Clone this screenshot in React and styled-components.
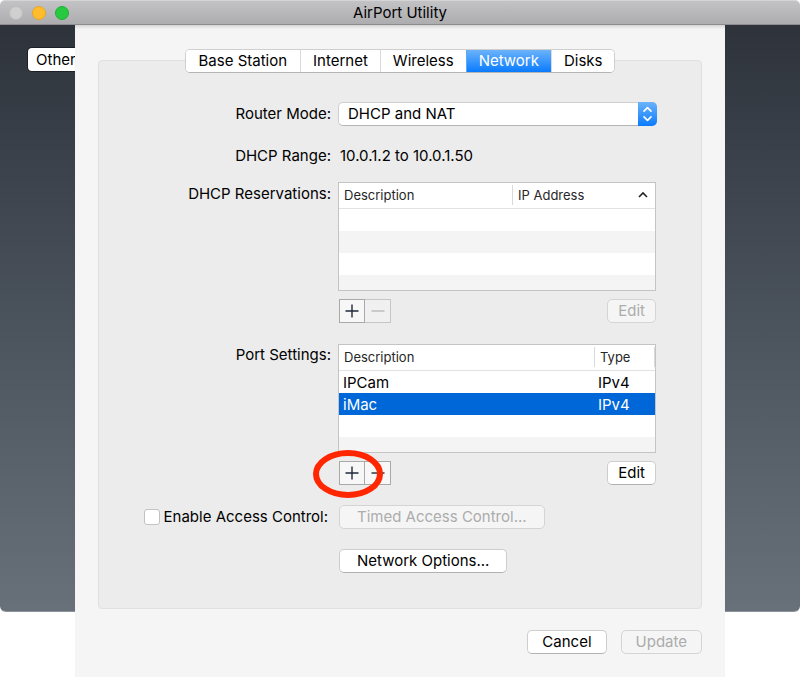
import React, { useState } from 'react';
import styled, { createGlobalStyle, css, ThemeProvider } from 'styled-components';

const theme = {
  colors: {
    text: '#000',
    disabled: '#acacac',
    sheet: '#f5f5f5',
    panel: '#ececec',
    border: '#c4c4c4',
    selection: '#0067d9',
    marker: '#ff2600',
  },
  accent: 'linear-gradient(#6bb3fa, #0a7bff)',
};

const GlobalStyle = createGlobalStyle`
  * {
    box-sizing: border-box;
  }
  body {
    margin: 0;
    background: #fff;
    color: #000;
    font-family: Inter, Roboto, sans-serif;
    font-size: 15px;
    line-height: 20px;
  }
  button, select, input {
    font: inherit;
    color: inherit;
    margin: 0;
  }
`;

/* ---------Window--------------- */
const TitleBar = styled.header`
  display: grid;
  grid-template-columns: 1fr auto 1fr;
  align-items: center;
  height: 25px;
  padding: 0 9px;
  background: linear-gradient(#c3c2c5, #adacaf);
  border-top: 1px solid #d4d3d6;
  border-bottom: 1px solid #8c8b8f;
  border-radius: 5px 5px 0 0;
`;
TitleBar.Title = styled.h1`
  margin: 0;
  font-size: 15px;
  font-weight: 400;
`;
TitleBar.Lights = styled.div`
  display: flex;
  gap: 9px;
`;
const Light = styled.button`
  width: 14px;
  height: 14px;
  padding: 0;
  border: 1px solid ${({ $edge }) => $edge};
  border-radius: 50%;
  background: ${({ $fill }) => $fill};
`;
const Stage = styled.main`
  display: grid;
`;
const Backdrop = styled.div`
  grid-area: 1 / 1;
  margin-bottom: 66px;
  padding: 23px 28px;
  background: linear-gradient(#2e333b, #4a525c 50%, #68707a);
  border-bottom: 1px solid #8b929c;
  border-radius: 0 0 6px 6px;
`;
const OtherButton = styled.button`
  width: 120px;
  height: 23px;
  padding: 0 8px;
  border: none;
  border-radius: 4px;
  background: #fff;
  line-height: 23px;
  text-align: left;
  box-shadow: 0 0 0 1px #1c1f26;
`;
const Sheet = styled.section`
  grid-area: 1 / 1;
  z-index: 1;
  margin: 0 75px;
  padding: 24px 23px;
  background: ${({ theme }) => theme.colors.sheet};
  box-shadow: inset 0 4px 4px -3px rgba(0, 0, 0, 0.2);
`;

/* ---------Tabs--------------- */
const Tabs = styled.div`
  display: flex;
  justify-content: center;
  position: relative;
  z-index: 1;
`;
Tabs.Group = styled.div`
  display: flex;
  overflow: hidden;
  height: 24px;
  border: 1px solid #cfcfcf;
  border-bottom-color: #b4b4b4;
  border-radius: 5px;
  background: #fff;
`;
Tabs.Item = styled.button`
  padding: 0 12px;
  border: none;
  border-left: 1px solid #dadada;
  background: #fff;
  &:first-child {
    border-left: none;
    padding: 0 13px;
  }
  ${({ 'aria-selected': selected, theme }) => selected && css`
    border-color: #5ba9f7;
    background: ${theme.accent};
    color: #fff;
  `}
`;

/* ---------Form--------------- */
const Panel = styled.div`
  display: grid;
  grid-template-columns: 232px minmax(0, 1fr);
  column-gap: 7px;
  margin-top: -13px;
  padding: 41px 45px 35px 0;
  border: 1px solid #e0e0e0;
  border-radius: 4px;
  background: ${({ theme }) => theme.colors.panel};
`;
const Label = styled.label`
  padding-top: ${({ $top }) => $top || 0}px;
  text-align: right;
`;
const Field = styled.div`
  margin-bottom: ${({ $gap }) => $gap || 0}px;
  padding-left: ${({ $inset }) => ($inset ? 1 : 0)}px;
`;
const RangeText = styled.output`
  display: block;
  padding-left: 2px;
`;
const SelectBox = styled.div`
  position: relative;
  height: 24px;
  margin-right: -1px;
`;
SelectBox.Input = styled.select`
  width: 100%;
  height: 24px;
  padding: 0 28px 0 9px;
  appearance: none;
  border: 1px solid #cfcfcf;
  border-bottom-color: #b4b4b4;
  border-radius: 5px;
  background: #fff;
`;
SelectBox.Stepper = styled.span`
  position: absolute;
  top: 0;
  right: 0;
  display: grid;
  place-items: center;
  width: 19px;
  height: 24px;
  border-radius: 0 5px 5px 0;
  background: ${({ theme }) => theme.accent};
  pointer-events: none;
`;

/* ---------Table--------------- */
const Table = styled.table`
  width: 100%;
  table-layout: fixed;
  border-collapse: separate;
  border-spacing: 0;
  border: 1px solid ${({ theme }) => theme.colors.border};
  background: #fff;
`;
const HeadCell = styled.th`
  width: ${({ $width }) => ($width ? `${$width}px` : 'auto')};
  height: 26px;
  padding: 2px 0 3px;
  border-bottom: 1px solid #e2e2e2;
  color: #262626;
  font-size: 13px;
  font-weight: 400;
  text-align: left;
`;
HeadCell.Inner = styled.div`
  display: flex;
  align-items: center;
  justify-content: space-between;
  height: 20px;
  padding: 0 6px 0 5px;
  border-left: 1px solid ${({ $divided }) => ($divided ? '#d9d9d9' : 'transparent')};
  border-right: 1px solid ${({ $closed }) => ($closed ? '#d9d9d9' : 'transparent')};
  margin-left: ${({ $divided }) => ($divided ? 0 : -1)}px;
`;
const Row = styled.tr`
  height: ${({ $short }) => ($short ? 15 : 22)}px;
  background: ${({ $striped }) => ($striped ? '#f4f4f4' : '#fff')};
  ${({ $selected, theme }) => $selected && css`
    background: ${theme.colors.selection};
    color: #fff;
  `}
`;
const Cell = styled.td`
  padding: 2px 4px 0;
  overflow: hidden;
`;

/* ---------Buttons--------------- */
const Button = styled.button`
  height: 24px;
  padding: 0 ${({ $pad }) => $pad || 10}px;
  border: 1px solid #cdcdcd;
  border-bottom-color: #b2b2b2;
  border-radius: 5px;
  background: #fff;
  &:disabled {
    border-color: #d4d4d4;
    background: #f5f5f5;
    color: ${({ theme }) => theme.colors.disabled};
  }
`;
const Tools = styled.div`
  display: flex;
  justify-content: space-between;
  position: relative;
  margin-top: 8px;
  padding-left: 1px;
`;
Tools.Pair = styled.div`
  display: flex;
`;
const SquareButton = styled.button`
  display: grid;
  place-items: center;
  width: 26px;
  height: 24px;
  padding: 0;
  border: 1px solid #a9a9a9;
  background: #f7f7f7;
  color: #222a38;
  & + & {
    border-left: none;
  }
  &:disabled {
    border-color: #c6c6c6;
    background: #f0f0f0;
    color: #b9b9b9;
  }
`;
const Marker = styled.svg`
  position: absolute;
  left: -26px;
  top: -12px;
  pointer-events: none;
`;
const CheckLabel = styled.label`
  display: flex;
  align-items: center;
  justify-content: flex-end;
  gap: 4px;
  height: 24px;
  padding-right: 3px;
  white-space: nowrap;
`;
const CheckBox = styled.input`
  appearance: none;
  width: 16px;
  height: 16px;
  border: 1px solid #c2c2c2;
  border-radius: 3px;
  background: #fff;
  &:checked {
    background: ${({ theme }) => theme.colors.selection};
  }
`;
const Footer = styled.footer`
  display: flex;
  justify-content: flex-end;
  gap: 14px;
  margin-top: 21px;
`;

const PlusIcon = () => (
  <svg width="14" height="14" viewBox="0 0 14 14" stroke="currentColor" strokeWidth="1.4">
    <path d="M0.5 7H13.5M7 0.5V13.5" />
  </svg>
);
const MinusIcon = () => (
  <svg width="14" height="14" viewBox="0 0 14 14" stroke="currentColor" strokeWidth="1.4">
    <path d="M0.5 7H13.5" />
  </svg>
);
const SortIcon = () => (
  <svg width="10" height="8" viewBox="0 0 10 8" fill="none" stroke="#222" strokeWidth="1.6">
    <path d="M1 6L5 2L9 6" />
  </svg>
);
const StepperIcon = () => (
  <svg width="11" height="16" viewBox="0 0 11 16" fill="none" stroke="#fff" strokeWidth="1.7" strokeLinecap="round" strokeLinejoin="round">
    <path d="M2 5.2L5.5 1.7L9 5.2M2 10.8L5.5 14.3L9 10.8" />
  </svg>
);

const tabs = ['Base Station', 'Internet', 'Wireless', 'Network', 'Disks'];
const ports = [
  { name: 'IPCam', type: 'IPv4' },
  { name: 'iMac', type: 'IPv4' },
];

export default function App() {
  const [tab, setTab] = useState('Network');
  const [port, setPort] = useState('iMac');

  return (
    <ThemeProvider theme={theme}>
      <GlobalStyle />
      <TitleBar>
        <TitleBar.Lights>
          <Light aria-label="Close" $fill="#cfcfcf" $edge="#bdbdbd" />
          <Light aria-label="Minimize" $fill="#ffbd2e" $edge="#e8a526" />
          <Light aria-label="Zoom" $fill="#27c940" $edge="#1fae33" />
        </TitleBar.Lights>
        <TitleBar.Title>AirPort Utility</TitleBar.Title>
      </TitleBar>
      <Stage>
        <Backdrop>
          <OtherButton type="button">Other</OtherButton>
        </Backdrop>
        <Sheet>
          <Tabs>
            <Tabs.Group role="tablist">
              {tabs.map((name) => (
                <Tabs.Item
                  key={name}
                  type="button"
                  role="tab"
                  aria-selected={name === tab}
                  onClick={() => setTab(name)}
                >
                  {name}
                </Tabs.Item>
              ))}
            </Tabs.Group>
          </Tabs>
          <Panel>
            <Label htmlFor="mode" $top={2}>Router Mode:</Label>
            <Field $gap={20}>
              <SelectBox>
                <SelectBox.Input id="mode">
                  <option>DHCP and NAT</option>
                </SelectBox.Input>
                <SelectBox.Stepper><StepperIcon /></SelectBox.Stepper>
              </SelectBox>
            </Field>

            <Label htmlFor="range">DHCP Range:</Label>
            <Field $gap={16}>
              <RangeText id="range">10.0.1.2 to 10.0.1.50</RangeText>
            </Field>

            <Label as="div" id="reservations" $top={2}>DHCP Reservations:</Label>
            <Field $gap={21}>
              <Table aria-labelledby="reservations">
                <thead>
                  <tr>
                    <HeadCell $width={173}><HeadCell.Inner>Description</HeadCell.Inner></HeadCell>
                    <HeadCell>
                      <HeadCell.Inner $divided>
                        IP Address
                        <SortIcon />
                      </HeadCell.Inner>
                    </HeadCell>
                  </tr>
                </thead>
                <tbody>
                  <Row><td colSpan={2} /></Row>
                  <Row $striped><td colSpan={2} /></Row>
                  <Row><td colSpan={2} /></Row>
                  <Row $striped $short><td colSpan={2} /></Row>
                </tbody>
              </Table>
              <Tools>
                <Tools.Pair>
                  <SquareButton type="button" aria-label="Add reservation"><PlusIcon /></SquareButton>
                  <SquareButton type="button" aria-label="Remove reservation" disabled><MinusIcon /></SquareButton>
                </Tools.Pair>
                <Button type="button" disabled>Edit</Button>
              </Tools>
            </Field>

            <Label as="div" id="ports" $top={1}>Port Settings:</Label>
            <Field $gap={20}>
              <Table aria-labelledby="ports">
                <thead>
                  <tr>
                    <HeadCell $width={255}><HeadCell.Inner>Description</HeadCell.Inner></HeadCell>
                    <HeadCell><HeadCell.Inner $divided $closed>Type</HeadCell.Inner></HeadCell>
                  </tr>
                </thead>
                <tbody>
                  {ports.map(({ name, type }) => (
                    <Row key={name} $selected={name === port} onClick={() => setPort(name)}>
                      <Cell>{name}</Cell>
                      <Cell>{type}</Cell>
                    </Row>
                  ))}
                  <Row><td colSpan={2} /></Row>
                  <Row $striped $short><td colSpan={2} /></Row>
                </tbody>
              </Table>
              <Tools>
                <Tools.Pair>
                  <SquareButton type="button" aria-label="Add port"><PlusIcon /></SquareButton>
                  <SquareButton type="button" aria-label="Remove port"><MinusIcon /></SquareButton>
                </Tools.Pair>
                <Button type="button">Edit</Button>
                <Marker width="72" height="50" viewBox="0 0 72 50" fill="none">
                  <ellipse cx="36" cy="25" rx="32" ry="21" stroke={theme.colors.marker} strokeWidth="6" />
                </Marker>
              </Tools>
            </Field>

            <CheckLabel>
              <CheckBox type="checkbox" />
              Enable Access Control:
            </CheckLabel>
            <Field $gap={20} $inset>
              <Button type="button" disabled $pad={17}>Timed Access Control...</Button>
            </Field>

            <span />
            <Field $inset>
              <Button type="button" $pad={17}>Network Options...</Button>
            </Field>
          </Panel>
          <Footer>
            <Button type="button" $pad={14}>Cancel</Button>
            <Button type="button" $pad={14} disabled>Update</Button>
          </Footer>
        </Sheet>
      </Stage>
    </ThemeProvider>
  );
}
